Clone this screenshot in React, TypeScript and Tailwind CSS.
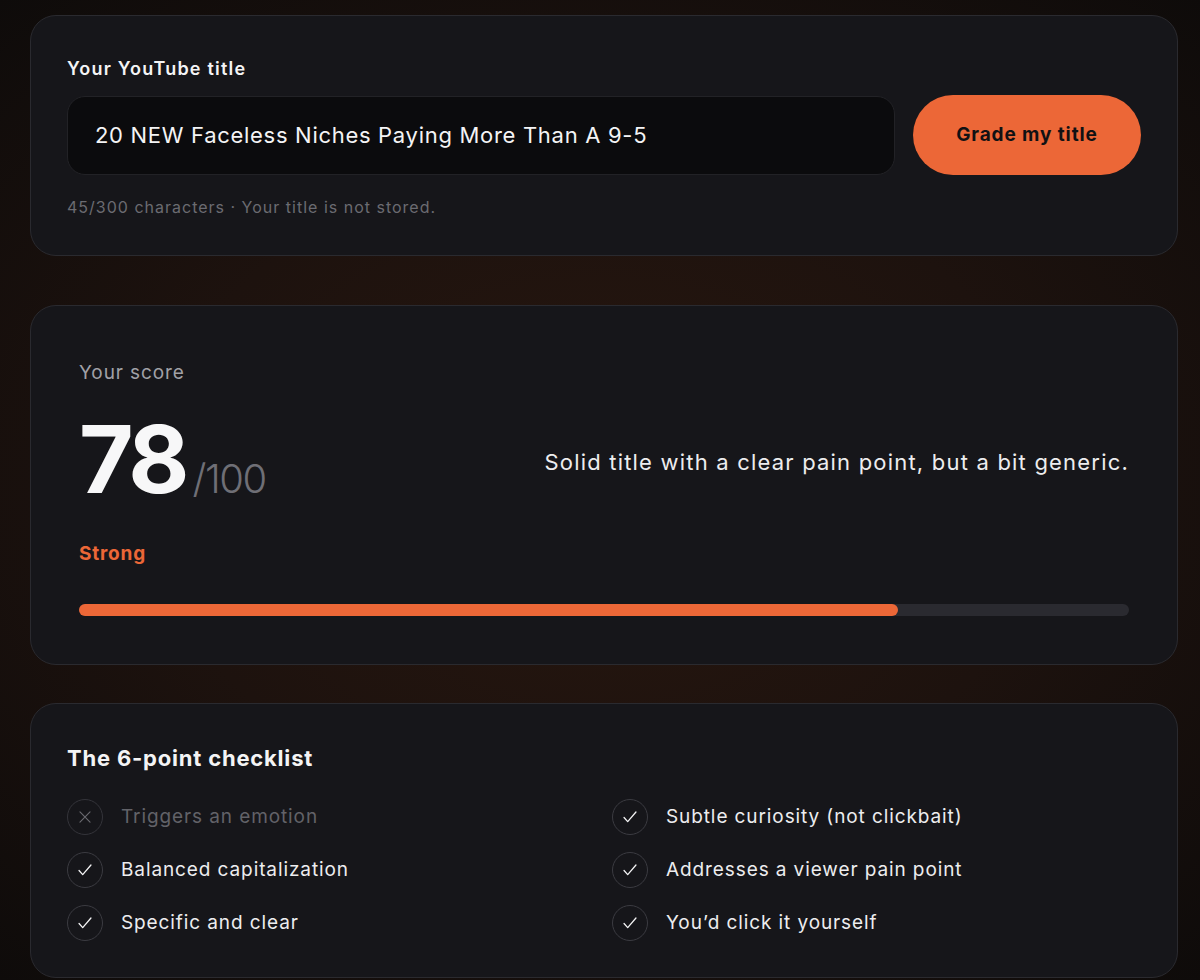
import React, { useState } from 'react';

const checklist = [
  { label: 'Triggers an emotion', passed: false },
  { label: 'Subtle curiosity (not clickbait)', passed: true },
  { label: 'Balanced capitalization', passed: true },
  { label: 'Addresses a viewer pain point', passed: true },
  { label: 'Specific and clear', passed: true },
  { label: 'You’d click it yourself', passed: true },
];

function CheckIcon() {
  return (
    <svg width="22" height="22" viewBox="0 0 24 24" fill="none" stroke="currentColor" strokeWidth="1.4" strokeLinecap="round" strokeLinejoin="round">
      <path d="M5.5 12.5l4 4.5L18.5 6.5" />
    </svg>
  );
}

function CrossIcon() {
  return (
    <svg width="22" height="22" viewBox="0 0 24 24" fill="none" stroke="currentColor" strokeWidth="1.2" strokeLinecap="round">
      <path d="M6.5 6.5l11 11M17.5 6.5l-11 11" />
    </svg>
  );
}

export default function App() {
  const [title, setTitle] = useState('20 NEW Faceless Niches Paying More Than A 9-5');
  const score = 78;

  return (
    <div className="min-h-[980px] w-[1200px] bg-[radial-gradient(ellipse_75%_65%_at_50%_48%,#28170f_0%,#1d120e_50%,#0e0b0a_100%)] px-[30px] pt-[15px] pb-10 font-['Inter',sans-serif] text-white">
      {/* TITLE INPUT */}
      <div className="w-[1148px] rounded-[26px] border border-[#2a2a2f] bg-[#16161a] px-[36px] pt-[42px] pb-[38px]">
        <label className="block text-[18px] font-semibold leading-[22px] tracking-[1.2px] text-[#f4f4f5]">Your YouTube title</label>
        <div className="mt-[15px] flex items-center gap-[18px]">
          <input
            value={title}
            onChange={(e) => setTitle(e.target.value)}
            className="h-[79px] flex-1 rounded-[18px] border border-[#222226] bg-[#0b0b0d] px-[27px] text-[22px] tracking-[0.7px] text-[#f4f4f5] outline-none"
          />
          <button className="h-[80px] w-[228px] rounded-full bg-[#ec6737] text-[19px] font-bold tracking-[0.9px] text-[#111113]">
            Grade my title
          </button>
        </div>
        <p className="mt-[22px] text-[16px] leading-[20px] tracking-[1px] text-[#6b6b71]">
          {title.length}/300 characters · Your title is not stored.
        </p>
      </div>

      {/* SCORE */}
      <div className="mt-[49px] w-[1148px] rounded-[26px] border border-[#2a2a2f] bg-[#16161a] px-[48px] pt-[54px] pb-[48px]">
        <p className="text-[19px] leading-[26px] tracking-[0.9px] text-[#a1a1a7]">Your score</p>
        <div className="mt-[23px] flex items-center justify-between">
          <div className="flex items-baseline gap-[7px]">
            <span className="text-[94px] font-bold leading-[100px] tracking-[-4px] text-[#f7f7f8]">{score}</span>
            <span className="text-[40px] font-light tracking-[-1.5px] text-[#6f6f76]">/100</span>
          </div>
          <p className="pt-[6px] text-[22px] tracking-[1.2px] text-[#ededef]">Solid title with a clear pain point, but a bit generic.</p>
        </div>
        <p className="mt-[32px] text-[19px] font-bold leading-[26px] tracking-[0.8px] text-[#ec6737]">Strong</p>
        <div className="mt-[37px] h-[12px] w-full rounded-full bg-[#2a2a30]">
          <div className="h-full rounded-full bg-[#ec6737]" style={{ width: `${score}%` }} />
        </div>
      </div>

      {/* CHECKLIST */}
      <div className="mt-[38px] w-[1148px] rounded-[26px] border border-[#2a2a2f] bg-[#16161a] px-[36px] pt-[40px] pb-[36px]">
        <h2 className="text-[22px] font-bold leading-[28px] tracking-[0.8px] text-[#f4f4f5]">The 6-point checklist</h2>
        <div className="mt-[27px] grid grid-cols-2 gap-x-[16px] gap-y-[17px]">
          {checklist.map((item) => (
            <div key={item.label} className="flex items-center gap-[18px]">
              <span
                className={`flex h-[36px] w-[36px] shrink-0 items-center justify-center rounded-full border ${item.passed ? 'border-[#3b3b41] text-[#f4f4f5]' : 'border-[#34343a] text-[#6b6b71]'}`}
              >
                {item.passed ? <CheckIcon /> : <CrossIcon />}
              </span>
              <span className={`text-[19px] tracking-[0.9px] ${item.passed ? 'text-[#ededef]' : 'text-[#626268]'}`}>{item.label}</span>
            </div>
          ))}
        </div>
      </div>
    </div>
  );
}
